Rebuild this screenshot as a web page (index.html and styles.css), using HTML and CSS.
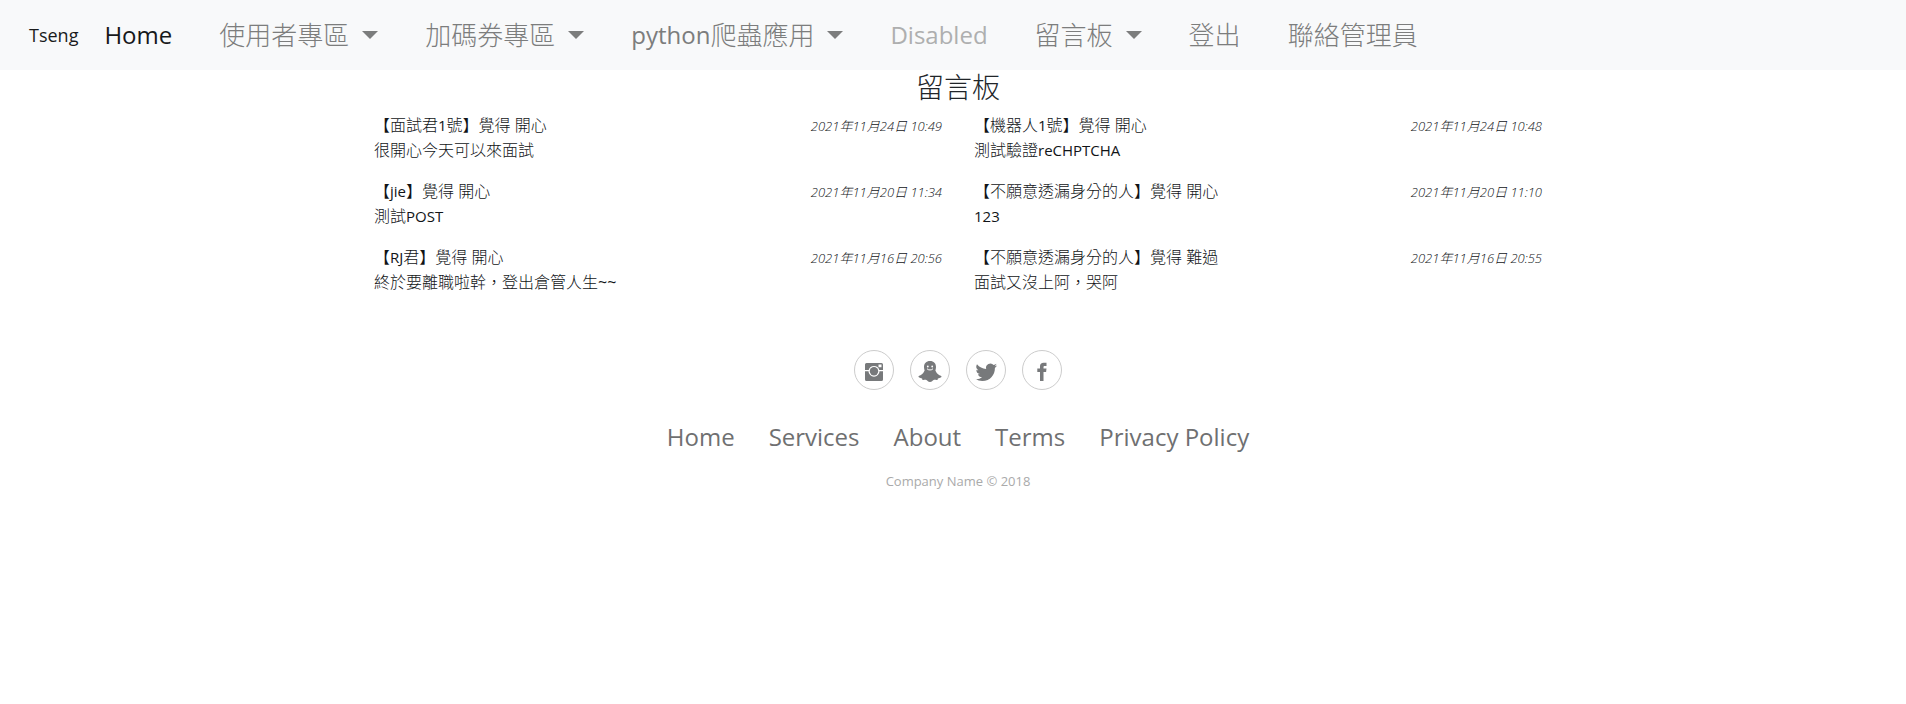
FILE: index.html
```
<!DOCTYPE html>
<html lang="zh-Hant">
<head>
<meta charset="utf-8">
<title>留言板</title>
<meta name="viewport" content="width=device-width, initial-scale=1">
<link rel="stylesheet" href="styles.css">
</head>
<body>
<nav class="navbar">
  <a class="brand" href="#">Tseng</a>
  <ul class="nav-list">
    <li><a class="nav-link latin active" href="#">Home</a></li>
    <li><button class="nav-link toggle" type="button">使用者專區</button></li>
    <li><button class="nav-link toggle" type="button">加碼券專區</button></li>
    <li><button class="nav-link toggle" type="button"><span class="latin">python</span>爬蟲應用</button></li>
    <li><a class="nav-link latin disabled" aria-disabled="true" href="#">Disabled</a></li>
    <li><button class="nav-link toggle" type="button">留言板</button></li>
    <li><a class="nav-link" href="#">登出</a></li>
    <li><a class="nav-link" href="#">聯絡管理員</a></li>
  </ul>
</nav>
<div class="page">
  <main>
    <h1 class="title">留言板</h1>
    <div class="messages">
      <article class="message">
        <header class="message-head"><span>【面試君<span class="latin-text">1</span>號】覺得 開心</span><time>2021年11月24日 10:49</time></header>
        <p>很開心今天可以來面試</p>
      </article>
      <article class="message">
        <header class="message-head"><span>【機器人<span class="latin-text">1</span>號】覺得 開心</span><time>2021年11月24日 10:48</time></header>
        <p>測試驗證<span class="latin-text">reCHPTCHA</span></p>
      </article>
      <article class="message">
        <header class="message-head"><span>【<span class="latin-text">jie</span>】覺得 開心</span><time>2021年11月20日 11:34</time></header>
        <p>測試<span class="latin-text">POST</span></p>
      </article>
      <article class="message">
        <header class="message-head"><span>【不願意透漏身分的人】覺得 開心</span><time>2021年11月20日 11:10</time></header>
        <p><span class="latin-text">123</span></p>
      </article>
      <article class="message">
        <header class="message-head"><span>【<span class="latin-text">RJ</span>君】覺得 開心</span><time>2021年11月16日 20:56</time></header>
        <p>終於要離職啦幹，登出倉管人生<span class="tilde">~~</span></p>
      </article>
      <article class="message">
        <header class="message-head"><span>【不願意透漏身分的人】覺得 難過</span><time>2021年11月16日 20:55</time></header>
        <p>面試又沒上阿，哭阿</p>
      </article>
    </div>
  </main>
  <footer class="footer">
    <div class="social">
      <a href="#" aria-label="Instagram"><svg viewBox="1 1 38 38"><path fill-rule="evenodd" d="M12.500 13h15A1.500 1.500 0 0 1 29 14.500V20h-3.700a5.500 5.500 0 0 0-10.600 0H11v-5.500a1.500 1.500 0 0 1 1.500-1.500zM24.500 14.500v2.700h3v-2.700z"/><path d="M11 21.200h3.500a5.500 5.500 0 0 0 11 0H29v8.300a1.500 1.500 0 0 1-1.500 1.500h-15a1.500 1.500 0 0 1-1.500-1.500z"/><circle cx="20" cy="21.300" r="4.200"/></svg></a>
      <a href="#" aria-label="Snapchat"><svg viewBox="1 1 38 38"><path d="M20 11c-3.800 0-6 2.400-6 6 0 1.300.3 2.200.6 3.400-.8 1.900-1.700 3.300-3.700 4.500-1.200.7-2.500 1-2.500 1.600 0 1.200 2.700 1.500 3.700 2 .3.500 0 1.300.6 1.500.9.300 2.600-.4 3.700 0 1.100.6 1.800 2 3.600 2s2.500-1.400 3.600-2c1.100-.4 2.800.3 3.700 0 .6-.2.300-1 .6-1.500 1-.5 3.700-.8 3.700-2 0-.6-1.300-.9-2.500-1.600-2-1.200-2.900-2.600-3.700-4.500.3-1.200.6-2.100.6-3.400 0-3.600-2.200-6-6-6z"/><g fill="#fff"><circle cx="17.800" cy="16.500" r=".9"/><circle cx="22.200" cy="16.500" r=".9"/></g><path d="M17 18.700c1 1.700 5 1.700 6 0" fill="none" stroke="#fff"/></svg></a>
      <a href="#" aria-label="Twitter"><svg viewBox="1 1 38 38"><path transform="translate(9.500 10.800) scale(1.350)" d="M5.026 15c6.038 0 9.341-5.003 9.341-9.334q.002-.211-.006-.422A6.700 6.700 0 0 0 16 3.542a6.700 6.700 0 0 1-1.889.518 3.300 3.300 0 0 0 1.447-1.817 6.500 6.500 0 0 1-2.087.793A3.286 3.286 0 0 0 7.875 6.030a9.320 9.320 0 0 1-6.767-3.429 3.290 3.290 0 0 0 1.018 4.382A3.300 3.300 0 0 1 .640 6.575v.045a3.290 3.290 0 0 0 2.632 3.218 3.200 3.200 0 0 1-.865.115 3 3 0 0 1-.614-.057 3.280 3.280 0 0 0 3.067 2.277A6.600 6.600 0 0 1 .780 13.580a6 6 0 0 1-.780-.045A9.340 9.340 0 0 0 5.026 15"/></svg></a>
      <a href="#" aria-label="Facebook"><svg viewBox="1 1 38 38"><path d="M18 31v-9h-2.700v-3.500H18V16.200c0-2.200 1.300-3.400 3.600-3.400h2.900V16h-1.900c-.8 0-1.100.4-1.100 1.100v1.400h3l-.4 3.500h-2.600v9z"/></svg></a>
    </div>
    <ul class="footer-links">
      <li><a href="#">Home</a></li>
      <li><a href="#">Services</a></li>
      <li><a href="#">About</a></li>
      <li><a href="#">Terms</a></li>
      <li><a href="#">Privacy Policy</a></li>
    </ul>
    <p class="copyright">Company Name © 2018</p>
  </footer>
</div>
</body>
</html>
```
FILE: styles.css
```
* { box-sizing: border-box; }

body {
  margin: 0;
  background: #fff;
  color: #212529;
  font: 300 16px/25px "Open Sans", "Noto Sans CJK TC", sans-serif;
}

a { color: inherit; text-decoration: none; }
ul { margin: 0; padding: 0; list-style: none; }
p { margin: 0; }

.navbar {
  display: flex;
  align-items: center;
  min-height: 70px;
  padding: 0 29px;
  background: #f8f9fa;
}

.brand {
  margin-right: 26px;
  color: #1a1b1c;
  font-size: 18px;
  font-weight: 400;
}

.nav-list {
  display: flex;
  align-items: center;
  gap: 47px;
}

.nav-link {
  display: block;
  padding: 0;
  border: 0;
  background: none;
  color: #7c7d7d;
  font: inherit;
  font-size: 26px;
  line-height: 40px;
  white-space: nowrap;
}

.latin { font-size: 24px; font-weight: 400; }
.active { color: #17181a; }
.disabled { color: #aeafaf; }

.toggle {
  display: flex;
  align-items: center;
}

.toggle::after {
  content: "";
  margin-left: 13px;
  border: 8px solid transparent;
  border-top-color: currentColor;
  border-bottom: 0;
}

/* The page column sits slightly right of the window's centre. */
.page { padding-left: 10px; }

.title {
  margin: 0 0 9px;
  font-size: 28px;
  font-weight: 300;
  line-height: 34px;
  text-align: center;
}

.messages {
  display: grid;
  grid-template-columns: 1fr 1fr;
  gap: 16px 32px;
  max-width: 1200px;
  margin: 0 auto;
  padding: 0 16px;
  color: #111417;
}

.message-head {
  display: flex;
  justify-content: space-between;
}

.message time {
  height: 25px;
  font-size: 13px;
  font-style: italic;
  line-height: 27px;
}

.latin-text { font-size: 15px; font-weight: 400; }
.tilde { font-weight: 400; }

.footer {
  padding: 55px 0 40px;
  color: #6f7071;
  font-weight: 400;
  text-align: center;
}

.social {
  display: flex;
  justify-content: center;
  gap: 16px;
}

.social a {
  width: 40px;
  height: 40px;
  border: 1px solid #ccc;
  border-radius: 50%;
}

.social svg {
  display: block;
  width: 100%;
  fill: #77797b;
}

.footer-links {
  display: flex;
  justify-content: center;
  gap: 34px;
  margin-top: 29px;
  font-size: 24px;
  line-height: 36px;
}

.copyright {
  margin-top: 14px;
  color: #aaa;
  font-size: 13px;
}
```
